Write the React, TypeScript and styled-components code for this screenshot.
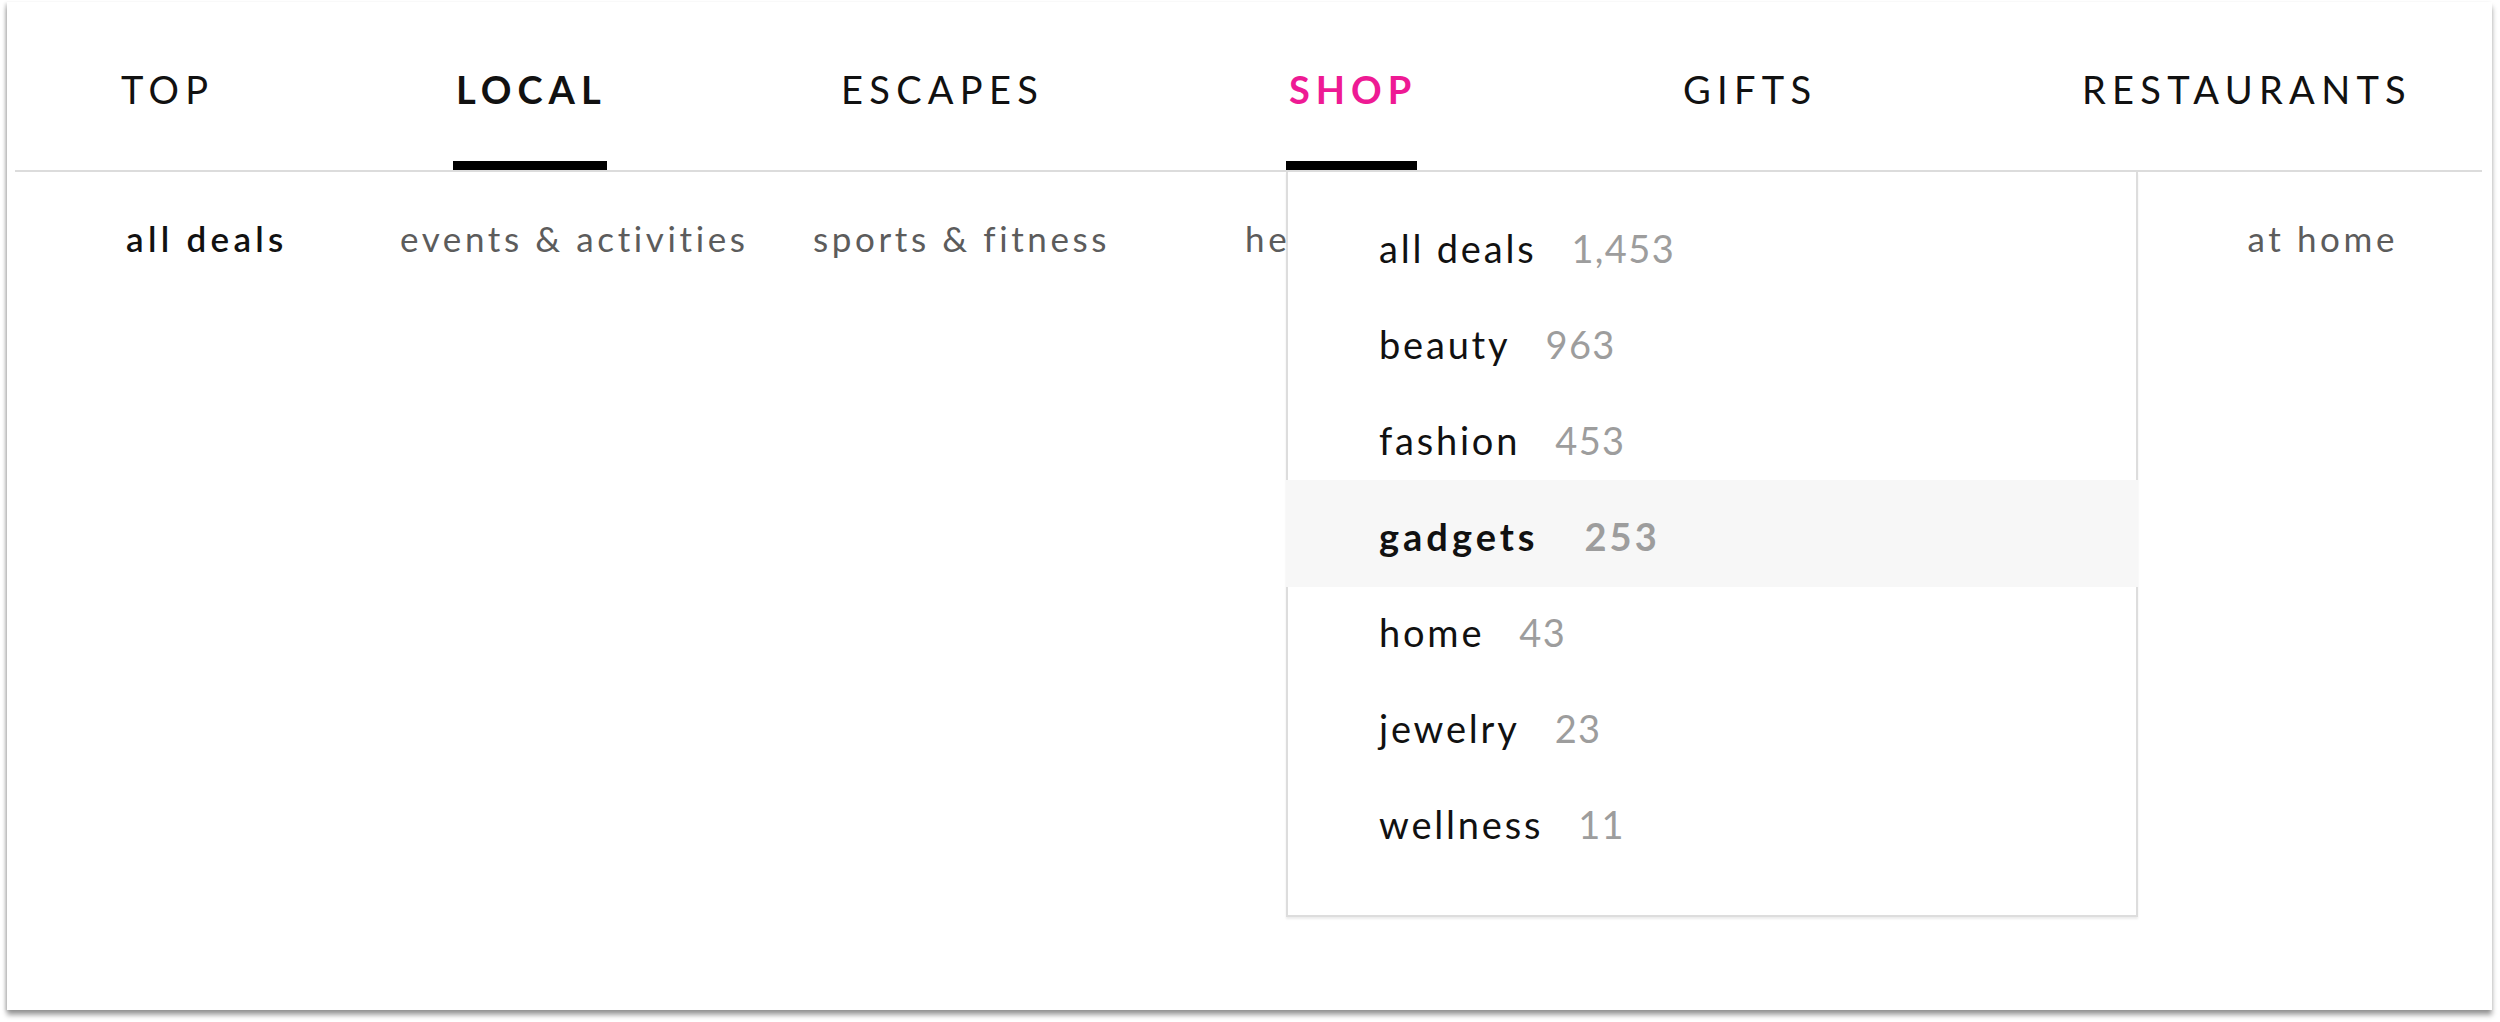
import styled, { createGlobalStyle } from "styled-components";

const GlobalStyle = createGlobalStyle`
  html, body {
    margin: 0;
    padding: 0;
    background: #fff;
  }
  body {
    font-family: Lato, "Liberation Sans", sans-serif;
    color: #111;
  }
`;

const Page = styled.div`
  padding: 2px 8px 12px 7px;
`;

const Card = styled.div`
  height: 1008px;
  background: #fff;
  padding: 0 10px 0 8px;
  box-shadow: 0 5px 5px rgba(0, 0, 0, 0.38), -2px 1px 3px rgba(0, 0, 0, 0.12);
`;

// column widths follow the spacing of the section tabs
const TopNav = styled.nav`
  display: grid;
  grid-template-columns: 335px 385px 448px 394px 399px auto;
  height: 168px;
  padding: 0 0 0 103px;
  border-bottom: 2px solid #dcdcdc;
`;

const NavItem = styled.div<{ $active?: boolean; $hover?: boolean }>`
  position: relative;
  justify-self: start;
  display: flex;
  align-items: flex-start;
  padding: 68px 3px 0;
  font-size: 38px;
  line-height: 1;
  letter-spacing: ${(p) => (p.$active || p.$hover ? "6px" : "6.3px")};
  font-weight: ${(p) => (p.$active || p.$hover ? 700 : 400)};
  color: ${(p) => (p.$hover ? "#ee1a94" : "#111")};
  box-shadow: ${(p) =>
    p.$active || p.$hover ? "inset 0 -9px 0 #000" : "none"};
`;

const NavLabel = styled.span`
  margin-right: -3px;
`;

const SubNav = styled.div`
  display: grid;
  grid-template-columns: 274px 413px 432px 1fr 1fr auto;
  padding: 49px 84px 0 111px;
  font-size: 35px;
  line-height: 1;
`;

const SubItem = styled.span<{ $current?: boolean }>`
  white-space: nowrap;
  letter-spacing: ${(p) => (p.$current ? "4.3px" : "3.6px")};
  font-weight: ${(p) => (p.$current ? 600 : 400)};
  color: ${(p) => (p.$current ? "#111" : "#5c5c5c")};
`;

const Dropdown = styled.div`
  position: absolute;
  top: calc(100% + 2px);
  left: 0;
  z-index: 2;
  width: 852px;
  height: 745px;
  box-sizing: border-box;
  padding: 28px 0 0;
  background: #fff;
  border: 2px solid #dddddd;
  border-top: none;
  box-shadow: 0 2px 2px rgba(0, 0, 0, 0.08);
  font-weight: 400;
  color: #111;
  letter-spacing: 2.8px;
`;

const MenuRow = styled.div<{ $highlight?: boolean }>`
  display: flex;
  align-items: baseline;
  height: 96px;
  line-height: 96px;
  padding-left: 91px;
  font-size: 38px;
  white-space: nowrap;
  ${(p) =>
    p.$highlight &&
    `
    height: 107px;
    margin: -8px -2px -3px;
    padding-left: 93px;
    line-height: 112px;
    background: #f7f7f7;
    font-weight: 700;
    letter-spacing: 4px;
  `}
`;

const Count = styled.span<{ $wide?: boolean }>`
  margin-left: ${(p) => (p.$wide ? "46px" : "35px")};
  color: #9d9d9d;
  letter-spacing: ${(p) => (p.$wide ? "3px" : "1.4px")};
`;

const sections = ["TOP", "LOCAL", "ESCAPES", "SHOP", "GIFTS", "RESTAURANTS"];

const subLinks = [
  "all deals",
  "events & activities",
  "sports & fitness",
  "health & beauty",
  "food & drink",
  "at home",
];

const shopCategories = [
  { name: "all deals", count: "1,453" },
  { name: "beauty", count: "963" },
  { name: "fashion", count: "453" },
  { name: "gadgets", count: "253" },
  { name: "home", count: "43" },
  { name: "jewelry", count: "23" },
  { name: "wellness", count: "11" },
];

export default function App() {
  const current = "LOCAL";
  const hovered = "SHOP";
  const highlighted = "gadgets";

  return (
    <>
      <GlobalStyle />
      <Page>
        <Card>
          <TopNav>
            {sections.map((s) => (
              <NavItem key={s} $active={s === current} $hover={s === hovered}>
                <NavLabel>{s}</NavLabel>
                {s === hovered && (
                  <Dropdown>
                    {shopCategories.map((c) => (
                      <MenuRow key={c.name} $highlight={c.name === highlighted}>
                        {c.name}
                        <Count $wide={c.name === highlighted}>{c.count}</Count>
                      </MenuRow>
                    ))}
                  </Dropdown>
                )}
              </NavItem>
            ))}
          </TopNav>
          <SubNav>
            {subLinks.map((l, i) => (
              <SubItem key={l} $current={i === 0}>
                {l}
              </SubItem>
            ))}
          </SubNav>
        </Card>
      </Page>
    </>
  );
}
